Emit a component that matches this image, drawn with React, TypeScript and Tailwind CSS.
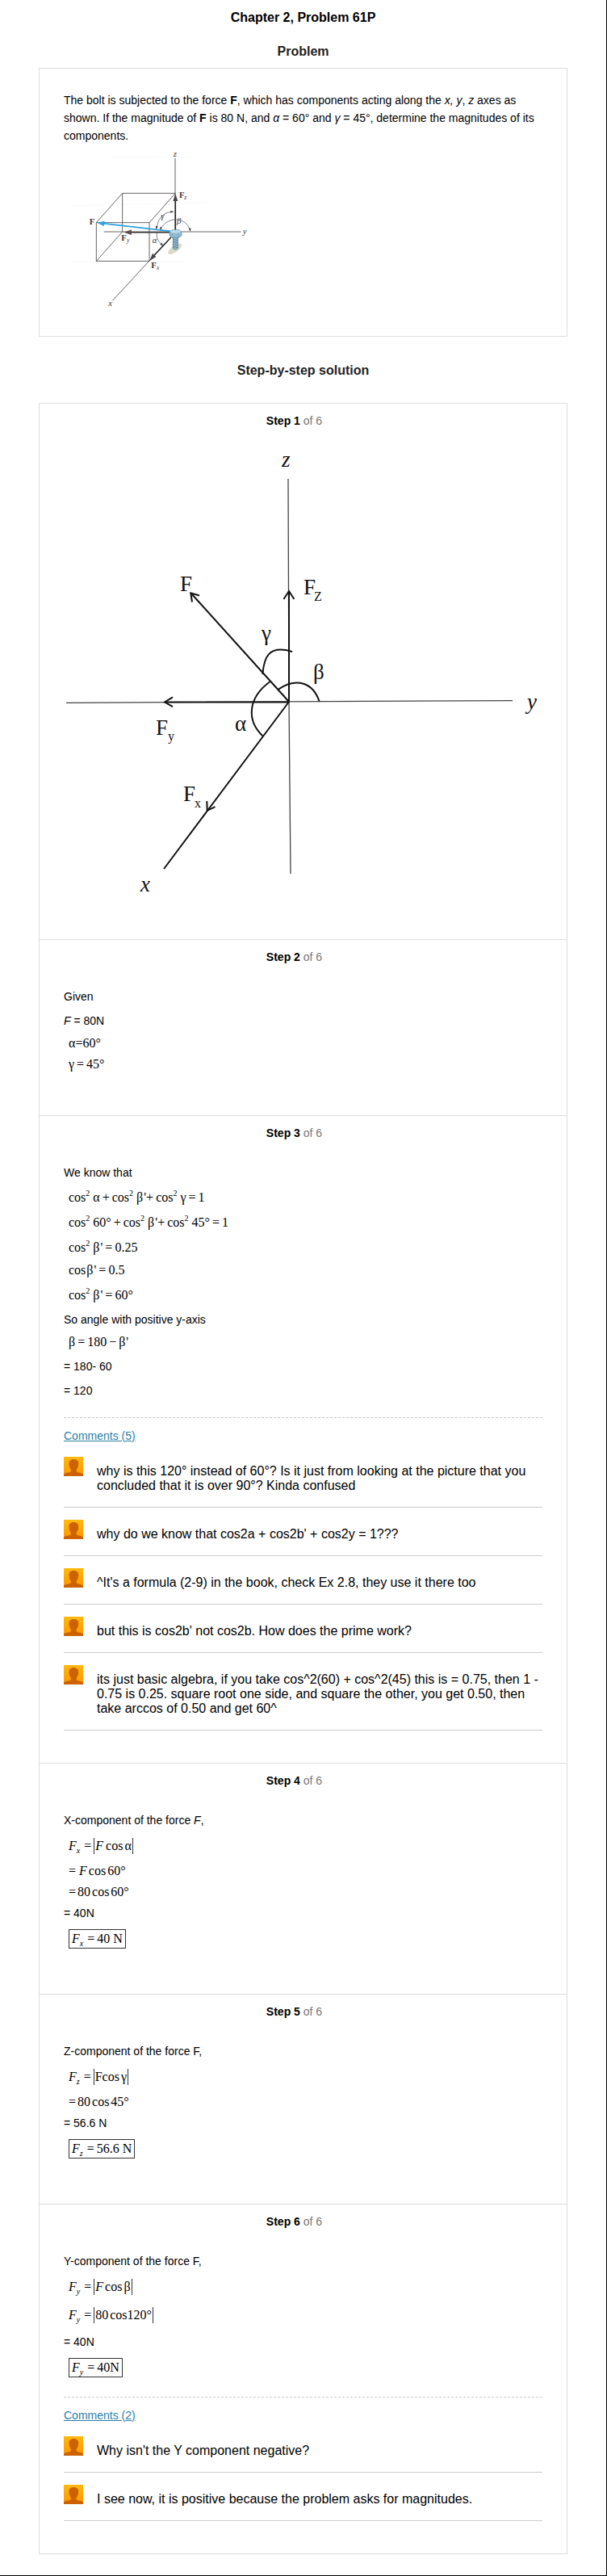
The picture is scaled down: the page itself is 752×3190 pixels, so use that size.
import type { ReactNode } from "react";

type RowKind = "text" | "plain" | "tight" | "deep" | "sup" | "abs";

const rowClass: Record<RowKind, string> = {
  text: "leading-[28px] mb-0.5 text-[14px]",
  plain: "leading-[24px] mb-0.5 pl-1.5 text-[16px] font-['Liberation_Serif',serif]",
  tight: "leading-[24px] pl-1.5 text-[16px] font-['Liberation_Serif',serif]",
  deep: "leading-[24px] mb-1 pl-1.5 text-[16px] font-['Liberation_Serif',serif]",
  sup: "leading-[30px] mb-px pl-1.5 text-[16px] font-['Liberation_Serif',serif]",
  abs: "leading-[32px] mb-[3px] pl-1.5 text-[16px] font-['Liberation_Serif',serif]",
};

function Row({ kind = "text", children }: { kind?: RowKind; children: ReactNode }) {
  return <p className={rowClass[kind]}>{children}</p>;
}

function Op({ children }: { children: ReactNode }) {
  return <span className="mx-[3px]">{children}</span>;
}

function Fn({ children }: { children: ReactNode }) {
  return <span className="mx-0.5">{children}</span>;
}

function CosSq() {
  return (
    <span className="mr-1">
      cos<sup className="-top-[7px] text-[10px]">2</sup>
    </span>
  );
}

function BetaPrime() {
  return (
    <>
      β<span className="ml-px">'</span>
    </>
  );
}

function Comp({ axis }: { axis: string }) {
  return (
    <span className="mr-0.5 italic">
      F<sub className="-bottom-1 text-[10px]">{axis}</sub>
    </span>
  );
}

function Abs({ children }: { children: ReactNode }) {
  return <span className="inline-block border-x border-[#333] px-px leading-[20px]">{children}</span>;
}

function Answer({ children }: { children: ReactNode }) {
  return (
    <p className="mt-1.5 mb-[7px] ml-1.5 w-fit border border-[#333] px-[3px] font-['Liberation_Serif',serif] text-[16px] leading-[22px]">
      {children}
    </p>
  );
}

function Avatar() {
  return (
    <svg viewBox="0 0 24 24" className="size-6 shrink-0" aria-hidden="true">
      <defs>
        <linearGradient id="avatar" x1="0" y1="0" x2="0" y2="1">
          <stop offset="0" stopColor="#ffb90f" />
          <stop offset="1" stopColor="#ff9600" />
        </linearGradient>
      </defs>
      <rect width="24" height="24" fill="url(#avatar)" />
      <path
        d="M12.300 3c3.900 0 5.900 2.200 5.900 5.600 0 2.800-.9 5-2.200 6.900-.5.900-.6 2-.3 2.800 1.600 1.500 6.300 1.500 8.300 3.200V24H0v-2.500c2-1.700 7.200-1.700 8.800-3.200.3-.8.2-1.900-.3-2.800-1.300-1.900-2.100-4.100-2.100-6.900C6.400 5.200 8.400 3 12.300 3z"
        fill="#cc6200"
      />
    </svg>
  );
}

function Comments({ items }: { items: string[] }) {
  return (
    <div className="mt-[17px] border-t border-dashed border-[#ccc] pt-3 pb-10">
      <a href="#comments" className="mb-px block w-fit text-[14px] leading-[20px] text-[#2b7ea8] underline">
        Comments ({items.length})
      </a>
      <ul>
        {items.map((text) => (
          <li key={text} className="flex gap-[17px] border-b border-[#ccc] pt-[15px] pb-[17px]">
            <Avatar />
            <p className="flex-1 pt-[9px] text-[16px] leading-[18px]">{text}</p>
          </li>
        ))}
      </ul>
    </div>
  );
}

function Step({ n, comments, children }: { n: number; comments?: string[]; children: ReactNode }) {
  return (
    <section className="border-t border-[#ddd] px-[30px] pt-[11px]">
      <h3 className="mb-[25px] pr-[22px] text-center text-[14px] leading-[20px] text-[#777]">
        <b className="text-black">Step {n}</b> of 6
      </h3>
      <div className={comments ? "flow-root" : "pb-[49px]"}>{children}</div>
      {comments && <Comments items={comments} />}
    </section>
  );
}

function BoltFigure() {
  return (
    <svg
      viewBox="-33 0 753 630"
      className="h-auto w-[251px]"
      role="img"
      aria-label="Bolt with force F"
      fill="none"
      stroke="#4a4444"
      strokeWidth="2.500"
    >
      <path d="M130 46H460M0 228L500 215M0 436H420" stroke="#f5f8f9" strokeWidth="2" />
      <ellipse cx="380" cy="388" rx="30" ry="12" transform="rotate(-35 380 388)" fill="#dcd9c8" stroke="none" />
      <path d="M381 50V320M116 324H365M405 324H626M365 345L148 580" />
      <path d="M88 290L185 181H382L285 290ZM88 290V433H285V290M185 181V324L88 433M285 433L300 417" />
      <path d="M382 208V318" stroke="#222" strokeWidth="4.500" />
      <path d="M382 183L391 210H373Z" fill="#4a4444" stroke="none" />
      <path d="M215 326H360" stroke="#333" strokeWidth="4.500" />
      <path d="M190 326L219 316V336Z" fill="#5b5050" stroke="none" />
      <path d="M366 344L300 415" stroke="#222" strokeWidth="4.500" />
      <path d="M286 432L297 404L310 417Z" fill="#4a4444" stroke="none" />
      <path d="M365 322L112 293" stroke="#2ba3e0" strokeWidth="5.500" />
      <path d="M90 290L119 284L116 303Z" fill="#2ba3e0" stroke="none" />
      <path d="M312 312C316 270 344 248 374 250M326 314C352 268 420 264 437 320M314 326C308 342 318 362 336 376" strokeWidth="2" />
      <path d="M376 250L364 245V254ZM437 323L431 311H440ZM337 377L325 372L331 364ZM311 316L308 303H317ZM325 319L325 305L333 309Z" fill="#4a4444" stroke="none" />
      <path d="M373 342H391V386L382 391L373 386Z" fill="#8fb6c9" stroke="#4d6e80" strokeWidth="2" />
      <path d="M373 352L391 356M373 361L391 365M373 370L391 374M373 379L391 383" stroke="#4d6e80" strokeWidth="2" />
      <path d="M360 323L372 317H395L405 324V338L394 346H371L360 338Z" fill="#8fc0d8" stroke="#5d8498" strokeWidth="2" />
      <path d="M360 323L372 317H395L405 324L394 330H371Z" fill="#b9dcea" stroke="#7ba3b5" strokeWidth="1.500" />
      <path d="M371 330V346M394 330V346" stroke="#5d8498" strokeWidth="1.500" />
      <g fill="#3a3636" stroke="none" className="font-['Liberation_Serif',serif] text-[32px]">
        <text x="374" y="46" className="italic">z</text>
        <text x="632" y="334" className="italic">y</text>
        <text x="133" y="600" className="italic">x</text>
        <text x="62" y="297" className="font-bold">F</text>
        <text x="396" y="197" className="font-bold">F</text>
        <text x="415" y="205" className="text-[22px] italic">z</text>
        <text x="181" y="356" className="font-bold">F</text>
        <text x="201" y="364" className="text-[22px] italic">y</text>
        <text x="292" y="458" className="font-bold">F</text>
        <text x="312" y="464" className="text-[22px] italic">x</text>
        <text x="328" y="276" className="italic">γ</text>
        <text x="387" y="295" className="italic">β</text>
        <text x="296" y="367" className="italic">α</text>
      </g>
    </svg>
  );
}

function AxesFigure() {
  return (
    <svg
      viewBox="79 556 593 558"
      className="block h-auto w-full overflow-visible"
      role="img"
      aria-label="Force components on the x, y and z axes"
      fill="none"
      stroke="#111"
      strokeWidth="2"
    >
      <path d="M357 593L358 869L360 1082M82 870.300L635 867.600" stroke="#444" strokeWidth="1.300" />
      <path d="M358 869V733M358 869.500H205M358 869L237 735M358 869L203 1076" />
      <path d="M351.400 742L358 732L364.400 742M214 863.400L204 869.500L214 875.200M247 737.500L236.300 734.400L238 745.500M256.300 992L256.700 1003.800L266.500 999.200" />
      <path d="M325.300 835C327 815 332 798 362 807M344.500 853.800C368 838 388 846 395.500 868.400M334.300 844.200C306 865 306 893 325.300 911.200" />
      <g fill="#111" stroke="none" className="font-['Liberation_Serif',serif] text-[27px]">
        <text x="349" y="578" className="italic">z</text>
        <text x="653" y="878" className="italic">y</text>
        <text x="174" y="1104" className="italic">x</text>
        <text x="223" y="732">F</text>
        <text x="376" y="736">F</text>
        <text x="389" y="744" className="text-[16px]">Z</text>
        <text x="193" y="910">F</text>
        <text x="208" y="917" className="text-[16px]">y</text>
        <text x="227" y="992">F</text>
        <text x="241" y="1000" className="text-[16px]">x</text>
        <text x="324" y="793">γ</text>
        <text x="388" y="841">β</text>
        <text x="291" y="905">α</text>
      </g>
    </svg>
  );
}

const stepThreeComments = [
  "why is this 120° instead of 60°? Is it just from looking at the picture that you concluded that it is over 90°? Kinda confused",
  "why do we know that cos2a + cos2b' + cos2y = 1???",
  "^It's a formula (2-9) in the book, check Ex 2.8, they use it there too",
  "but this is cos2b' not cos2b. How does the prime work?",
  "its just basic algebra, if you take cos^2(60) + cos^2(45) this is = 0.75, then 1 - 0.75 is 0.25. square root one side, and square the other, you get 0.50, then take arccos of 0.50 and get 60^",
];

const stepSixComments = [
  "Why isn't the Y component negative?",
  "I see now, it is positive because the problem asks for magnitudes.",
];

export default function App() {
  return (
    <main className="border-r border-b border-black bg-white px-12 pt-3 pb-[26px] font-['Liberation_Sans',Arial,sans-serif] text-black">
      <h1 className="text-center text-[16px] leading-[20px] font-bold">Chapter 2, Problem 61P</h1>
      <h2 className="mt-[22px] text-center text-[16px] leading-[20px] font-bold text-[#222]">Problem</h2>
      <section className="mt-[10px] border border-[#ddd] px-[30px] pt-[28px] pb-[27px]">
        <p className="text-[14px] leading-[22px]">
          The bolt is subjected to the force <b>F</b>, which has components acting along the <i>x, y</i>,{" "}
          <i>z</i> axes as shown. If the magnitude of <b>F</b> is 80 N, and <i>α</i> = 60° and <i>γ</i> = 45°,
          determine the magnitudes of its components.
        </p>
        <BoltFigure />
      </section>
      <h2 className="mt-8 mb-[30px] text-center text-[16px] leading-[20px] font-bold text-[#222]">
        Step-by-step solution
      </h2>
      <div className="border-x border-b border-[#ddd]">
        <Step n={1}>
          <AxesFigure />
        </Step>
        <Step n={2}>
          <Row>Given</Row>
          <Row>
            <i>F</i> = 80N
          </Row>
          <Row kind="plain">α=60°</Row>
          <Row kind="plain">
            γ<Op>=</Op>45°
          </Row>
        </Step>
        <Step n={3} comments={stepThreeComments}>
          <Row>We know that</Row>
          <Row kind="sup">
            <CosSq />α<Op>+</Op>
            <CosSq />
            <BetaPrime />
            <span className="mr-[3px]">+</span>
            <CosSq />γ<Op>=</Op>1
          </Row>
          <Row kind="sup">
            <CosSq />
            60°<Op>+</Op>
            <CosSq />
            <BetaPrime />
            <span className="mr-[3px]">+</span>
            <CosSq />
            45°<Op>=</Op>1
          </Row>
          <Row kind="sup">
            <CosSq />
            <BetaPrime />
            <Op>=</Op>0.25
          </Row>
          <Row kind="deep">
            <span className="mr-px">cos</span>
            <BetaPrime />
            <Op>=</Op>0.5
          </Row>
          <Row kind="sup">
            <CosSq />
            <BetaPrime />
            <Op>=</Op>60°
          </Row>
          <Row>So angle with positive y-axis</Row>
          <Row kind="deep">
            β<Op>=</Op>180<Op>−</Op>
            <BetaPrime />
          </Row>
          <Row>= 180- 60</Row>
          <Row>= 120</Row>
        </Step>
        <Step n={4}>
          <Row>
            X-component of the force <i>F</i>,
          </Row>
          <Row kind="abs">
            <Comp axis="x" />
            <Op>=</Op>
            <Abs>
              <i className="mr-px">F</i>
              <Fn>cos</Fn>α
            </Abs>
          </Row>
          <Row kind="plain">
            = <i>F</i>
            <Fn>cos</Fn>60°
          </Row>
          <Row kind="tight">
            <span className="mr-0.5">=</span>80<Fn>cos</Fn>60°
          </Row>
          <Row>= 40N</Row>
          <Answer>
            <Comp axis="x" />
            <Op>=</Op>40 N
          </Answer>
        </Step>
        <Step n={5}>
          <Row>Z-component of the force F,</Row>
          <Row kind="abs">
            <Comp axis="z" />
            <Op>=</Op>
            <Abs>
              Fcos<span className="ml-0.5">γ</span>
            </Abs>
          </Row>
          <Row kind="tight">
            <span className="mr-0.5">=</span>80<Fn>cos</Fn>45°
          </Row>
          <Row>= 56.6 N</Row>
          <Answer>
            <Comp axis="z" />
            <Op>=</Op>56.6 N
          </Answer>
        </Step>
        <Step n={6} comments={stepSixComments}>
          <Row>Y-component of the force F,</Row>
          <Row kind="abs">
            <Comp axis="y" />
            <Op>=</Op>
            <Abs>
              <i>F</i>
              <Fn>cos</Fn>β
            </Abs>
          </Row>
          <Row kind="abs">
            <Comp axis="y" />
            <Op>=</Op>
            <Abs>
              80<span className="ml-0.5">cos</span>120°
            </Abs>
          </Row>
          <Row>= 40N</Row>
          <Answer>
            <Comp axis="y" />
            <Op>=</Op>40N
          </Answer>
        </Step>
      </div>
    </main>
  );
}
